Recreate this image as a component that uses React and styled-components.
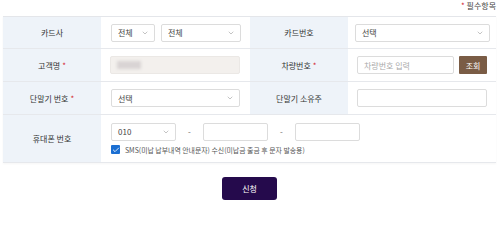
import React from "react";
import styled, { createGlobalStyle } from "styled-components";
import { ChevronDown, Check } from "lucide-react";

const GlobalStyle = createGlobalStyle`
  *, *::before, *::after {
    box-sizing: border-box;
  }
  html, body {
    margin: 0;
    padding: 0;
    background: #ffffff;
    font-family: "Noto Sans CJK KR", "Noto Sans", sans-serif;
    color: #333;
  }
`;

const Page = styled.div`
  width: 500px;
  padding: 0 4px 0 3px;
`;

const Required = styled.div`
  height: 16px;
  display: flex;
  justify-content: flex-end;
  align-items: flex-start;
  font-size: 8px;
  line-height: 11px;
  color: #444;
  span {
    color: #d3232f;
  }
`;

const Table = styled.div`
  display: grid;
  grid-template-columns: 98px 149px 98px 148px;
  border-top: 1px solid #e4e6ea;
  box-shadow: 0 1px 2px rgba(0, 0, 0, 0.04);
`;

const Label = styled.div`
  background: #eef3f9;
  display: flex;
  align-items: center;
  justify-content: center;
  font-size: 8px;
  color: #333;
  height: ${(p) => p.$h}px;
  border-bottom: 1px solid #e6e8ec;
  span {
    color: #d3232f;
    margin-left: 2px;
  }
`;

const Cell = styled.div`
  display: flex;
  flex-direction: ${(p) => (p.$col ? "column" : "row")};
  justify-content: ${(p) => (p.$col ? "center" : "flex-start")};
  align-items: ${(p) => (p.$col ? "flex-start" : "center")};
  gap: ${(p) => (p.$col ? 4 : 6)}px;
  padding-left: ${(p) => p.$pl || 9}px;
  height: ${(p) => p.$h}px;
  border-bottom: 1px solid #e6e8ec;
`;

const Line = styled.div`
  display: flex;
  align-items: center;
`;

const SelectBox = styled.div`
  width: ${(p) => p.$w}px;
  height: 18px;
  flex-shrink: 0;
  border: 1px solid #dcdcdc;
  border-radius: 2px;
  background: #fff;
  display: flex;
  align-items: center;
  justify-content: space-between;
  padding: 0 5px 0 6px;
  font-size: 8px;
  color: #444;
  svg {
    color: #888;
  }
`;

const Input = styled.div`
  width: ${(p) => p.$w}px;
  height: 18px;
  flex-shrink: 0;
  border: 1px solid ${(p) => (p.$disabled ? "#ebe8e5" : "#dcdcdc")};
  border-radius: 2px;
  background: ${(p) => (p.$disabled ? "#f3f0ed" : "#fff")};
  display: flex;
  align-items: center;
  padding-left: 6px;
  font-size: 8px;
  color: #aaa;
`;

const Blur = styled.span`
  display: inline-block;
  width: 24px;
  height: 8px;
  background: #d9d4d4;
  filter: blur(1.5px);
`;

const Dash = styled.span`
  width: 27px;
  text-align: center;
  font-size: 8px;
  color: #666;
`;

const SearchButton = styled.button`
  width: 28px;
  height: 18px;
  flex-shrink: 0;
  border: none;
  border-radius: 1px;
  background: #7a5c45;
  color: #fff;
  font-family: inherit;
  font-size: 8px;
  padding: 0;
  margin-left: -1px;
`;

const CheckRow = styled.label`
  display: flex;
  align-items: center;
  gap: 5px;
  font-size: 6.9px;
  color: #555;
  white-space: nowrap;
`;

const CheckBox = styled.span`
  width: 9px;
  height: 9px;
  border-radius: 1px;
  background: #1b6fd2;
  display: flex;
  align-items: center;
  justify-content: center;
  color: #fff;
`;

const Footer = styled.div`
  display: flex;
  justify-content: center;
  padding-top: 14px;
`;

const SubmitButton = styled.button`
  width: 55px;
  height: 23px;
  border: none;
  border-radius: 3px;
  background: #250a4c;
  color: #fff;
  font-family: inherit;
  font-size: 8px;
`;

function Select({ w, children }) {
  return (
    <SelectBox $w={w}>
      {children}
      <ChevronDown size={8} strokeWidth={1.5} />
    </SelectBox>
  );
}

export default function App() {
  return (
    <Page>
      <GlobalStyle />
      <Required>
        <span>*</span>&nbsp;필수항목
      </Required>
      <Table>
        <Label $h={32}>카드사</Label>
        <Cell $h={32} $pl={10}>
          <Select w={44}>전체</Select>
          <Select w={80}>전체</Select>
        </Cell>
        <Label $h={32}>카드번호</Label>
        <Cell $h={32} $pl={7}>
          <Select w={135}>선택</Select>
        </Cell>

        <Label $h={33}>
          고객명<span>*</span>
        </Label>
        <Cell $h={33} $pl={9}>
          <Input $w={130} $disabled>
            <Blur />
          </Input>
        </Cell>
        <Label $h={33}>
          차량번호<span>*</span>
        </Label>
        <Cell $h={33}>
          <Input $w={97}>차량번호 입력</Input>
          <SearchButton>조회</SearchButton>
        </Cell>

        <Label $h={33}>
          단말기 번호<span>*</span>
        </Label>
        <Cell $h={33} $pl={10}>
          <Select w={129}>선택</Select>
        </Cell>
        <Label $h={33}>단말기 소유주</Label>
        <Cell $h={33}>
          <Input $w={130} />
        </Cell>

        <Label $h={48}>휴대폰 번호</Label>
        <Cell $h={48} $pl={10} $col style={{ gridColumn: "span 3" }}>
          <Line>
            <Select w={65}>010</Select>
            <Dash>-</Dash>
            <Input $w={65} />
            <Dash>-</Dash>
            <Input $w={65} />
          </Line>
          <CheckRow>
            <CheckBox>
              <Check size={8} strokeWidth={2.5} />
            </CheckBox>
            SMS(미납 납부내역 안내문자) 수신(미납금 출금 후 문자 발송용)
          </CheckRow>
        </Cell>
      </Table>
      <Footer>
        <SubmitButton>신청</SubmitButton>
      </Footer>
    </Page>
  );
}
